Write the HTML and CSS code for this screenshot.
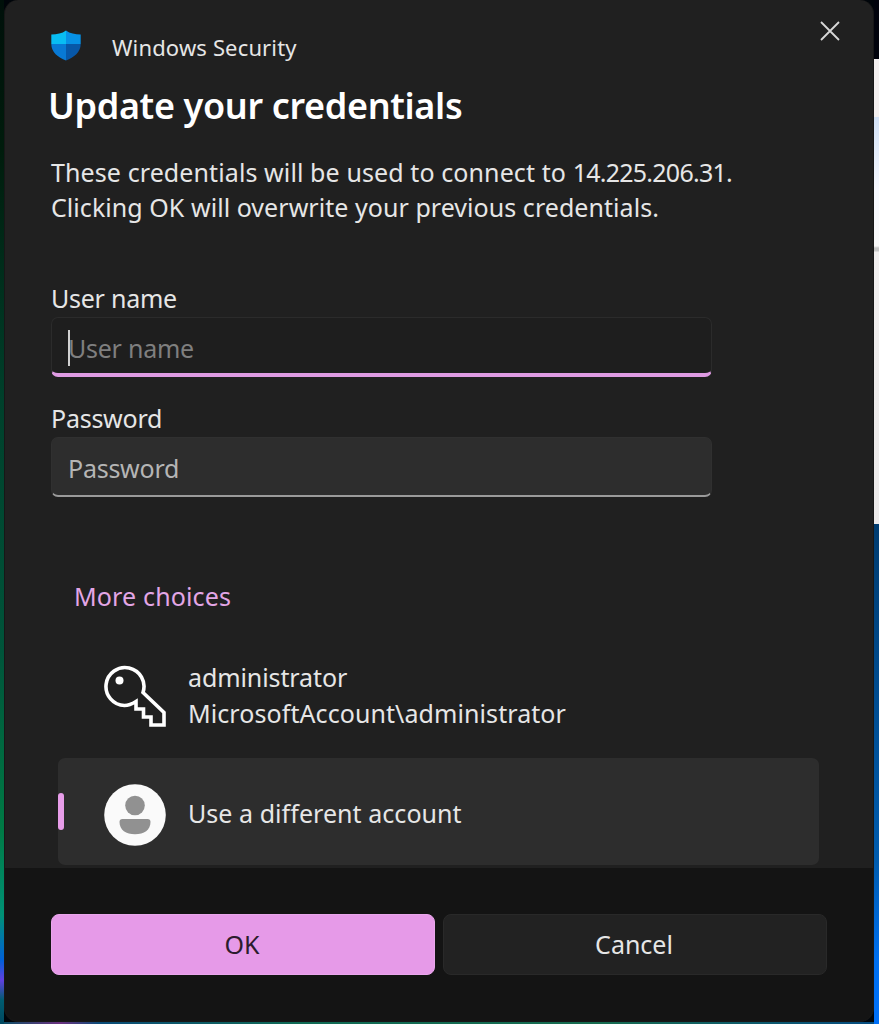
FILE: index.html
```
<!DOCTYPE html>
<html lang="en">
<head>
    <meta charset="UTF-8">
    <meta name="viewport" content="width=device-width, initial-scale=1.0">
    <title>Windows Security</title>
    <link rel="stylesheet" href="styles.css">
</head>
<body>
    <div class="edge left"></div>
    <form class="dialog">
        <div class="content">
            <header>
                <svg class="shield" viewBox="0 0 30 31">
                    <defs>
                        <clipPath id="shieldShape">
                            <path d="M15 0.5C19 3.5 24 4.4 29.7 4.5V14C29.7 22 23 27.500 15 30.500C7 27.500 0.300 22 0.300 14V4.500C6 4.400 11 3.500 15 0.500Z"/>
                        </clipPath>
                    </defs>
                    <g clip-path="url(#shieldShape)">
                        <rect width="15" height="14" fill="#08bdf3"/>
                        <rect x="15" width="15" height="14" fill="#0791e6"/>
                        <rect y="14" width="15" height="17" fill="#0879d4"/>
                        <rect x="15" y="14" width="15" height="17" fill="#0757a8"/>
                    </g>
                </svg>
                <span class="app-name">Windows Security</span>
                <button type="button" class="close" aria-label="Close">
                    <svg viewBox="0 0 20 20"><path d="M1 1L19 19M19 1L1 19"/></svg>
                </button>
            </header>

            <h1>Update your credentials</h1>
            <p class="message"><span class="line1">These credentials will be used to connect to <span class="ip">14.225.206.31.</span></span><br><span class="line2">Clicking OK will overwrite your previous credentials.</span></p>

            <label for="username">User name</label>
            <div class="field active">
                <span class="caret"></span>
                <input type="text" id="username" placeholder="User name">
            </div>
            <label for="password">Password</label>
            <div class="field">
                <input type="password" id="password" placeholder="Password">
            </div>

            <a class="more">More choices</a>

            <div class="choice">
                <svg class="icon" viewBox="0 0 62 62">
                    <path class="key" d="M39 27.500L60 47.500V60H47V52H39.500V44H32V36.500C28 39 24 40.500 20.500 40.500A19 19 0 1 1 39 27.500Z"/>
                    <circle cx="15.500" cy="15.500" r="4" fill="#fff"/>
                </svg>
                <div class="account">
                    <div class="name">administrator</div>
                    <div class="domain">MicrosoftAccount\administrator</div>
                </div>
            </div>
            <div class="choice selected">
                <svg class="icon" viewBox="0 0 62 62">
                    <circle cx="31" cy="31" r="30.800" fill="#fafafa"/>
                    <circle cx="31" cy="21.500" r="9.800" fill="#919191"/>
                    <path d="M18.500 35H43.500Q46.500 35 46.500 38C46.500 46 40 50.300 31 50.300S15.500 46 15.500 38Q15.500 35 18.500 35Z" fill="#919191"/>
                </svg>
                <div class="different">Use a different account</div>
            </div>
        </div>

        <footer>
            <button type="button" class="btn ok">OK</button>
            <button type="button" class="btn cancel">Cancel</button>
        </footer>
    </form>
    <div class="edge right"></div>
</body>
</html>
```
FILE: styles.css
```
* {
    box-sizing: border-box;
}

body {
    margin: 0;
    width: 879px;
    height: 1024px;
    display: flex;
    overflow: hidden;
    font-family: "Noto Sans", sans-serif;
    font-size: 25px;
    line-height: 36px;
    color: #e6e6e6;
    background: #00050a linear-gradient(90deg, #075064, #6b3180 60px, #0a4c78 100px, #106b55 300px, #176c50 600px, #064d80 870px) 0 1022px no-repeat;
    white-space: nowrap;
}

.edge.left {
    width: 4px;
    background: linear-gradient(#00100a, #001c0c 150px, #00402b 400px, #00543a 650px, #007a45 830px, #009276 915px, #0060d8 960px, #6040e0 980px, #005c70 1000px, #004860);
}

.edge.right {
    width: 5px;
    background: linear-gradient(#01030c 59px, #f4f0f0 59px, #f4f0f0 117px, #d3e2f7 117px, #f7f9ff 190px, #fafafa 246px, #c8c8c8 248px, #c8c8c8 251px, #f2f0f0 252px, #eceaea 524px, #003c70 524px, #005cae 860px, #0070f0 960px, #0070f8);
}

.dialog {
    width: 870px;
    height: 1022px;
    border: 1px solid #171717;
    border-top: 0;
    border-radius: 14px;
    overflow: hidden;
    background-color: #202020;
}

.content {
    height: 868px;
    padding: 0 46px;
}

header {
    display: flex;
    height: 84px;
}

.shield {
    width: 30px;
    height: 31px;
    margin-top: 30px;
}

.app-name {
    margin: 29px 0 0 31px;
    font-size: 22px;
    letter-spacing: 0.15px;
}

.close {
    width: 20px;
    height: 20px;
    margin: 21px -13px 0 auto;
    padding: 0;
    border: none;
    background: none;
}

.close svg {
    display: block;
    fill: none;
    stroke: #d8d8d8;
    stroke-width: 1.8;
}

h1 {
    margin: 0 0 0 -3px;
    font-size: 36px;
    font-weight: 600;
    line-height: 44px;
    letter-spacing: -0.35px;
    color: #fff;
}

.message {
    margin: 27px 0 56px;
    line-height: 34.5px;
}

.line1 {
    letter-spacing: 0.1px;
}

.ip {
    letter-spacing: -0.75px;
}

.line2 {
    letter-spacing: 0.05px;
}

label {
    display: block;
    height: 37px;
    letter-spacing: -0.25px;
}

.field {
    position: relative;
    width: 661px;
    height: 60px;
    margin-bottom: 23px;
    border: 1px solid #303030;
    border-bottom: 2px solid #9a9a9a;
    border-radius: 7px;
    background-color: #2d2d2d;
    letter-spacing: -0.25px;
}

.field.active {
    border-color: #2b2b2b;
    border-bottom: 4px solid #df9be3;
    background-color: #1e1e1e;
}

.field input {
    display: block;
    width: 100%;
    height: 56px;
    padding: 3px 16px 0;
    border: none;
    outline: none;
    background: none;
    font: inherit;
    letter-spacing: inherit;
}

.field input::placeholder {
    color: #b5b5b5;
}

.field.active input::placeholder {
    color: #7f7f7f;
}

.caret {
    position: absolute;
    left: 16px;
    top: 12px;
    width: 2px;
    height: 36px;
    background-color: #d0d0d0;
}

.more {
    display: block;
    margin: 81px 0 29px 23px;
    letter-spacing: 0.15px;
    color: #e3a6e6;
}

.choice {
    display: flex;
    align-items: center;
    width: 761px;
    height: 106px;
    margin: 0 0 9px 7px;
    padding-left: 46px;
}

.account {
    padding-bottom: 2px;
}

.name {
    letter-spacing: -0.1px;
}

.domain {
    letter-spacing: 0.08px;
}

.different {
    padding-bottom: 4px;
    letter-spacing: 0.05px;
}

.selected {
    position: relative;
    height: 107px;
    padding-top: 7px;
    border-radius: 7px;
    background-color: #2d2d2d;
}

.selected::before {
    content: "";
    position: absolute;
    left: 0;
    top: 35px;
    width: 6px;
    height: 37px;
    border-radius: 3px;
    background-color: #e79de9;
}

.icon {
    width: 62px;
    height: 62px;
    margin-right: 22px;
}

.key {
    fill: none;
    stroke: #fff;
    stroke-width: 3.6;
}

footer {
    display: flex;
    gap: 8px;
    height: 154px;
    padding: 46px 46px 0;
    background-color: #141414;
}

.btn {
    width: 384px;
    height: 61px;
    padding: 0 2px 2px 0;
    border: 1px solid #292929;
    border-radius: 8px;
    background-color: #222;
    color: #e6e6e6;
    font: inherit;
}

.ok {
    border-color: #eaa6ec;
    background-color: #e69ae8;
    color: #2c1c2d;
}
```
